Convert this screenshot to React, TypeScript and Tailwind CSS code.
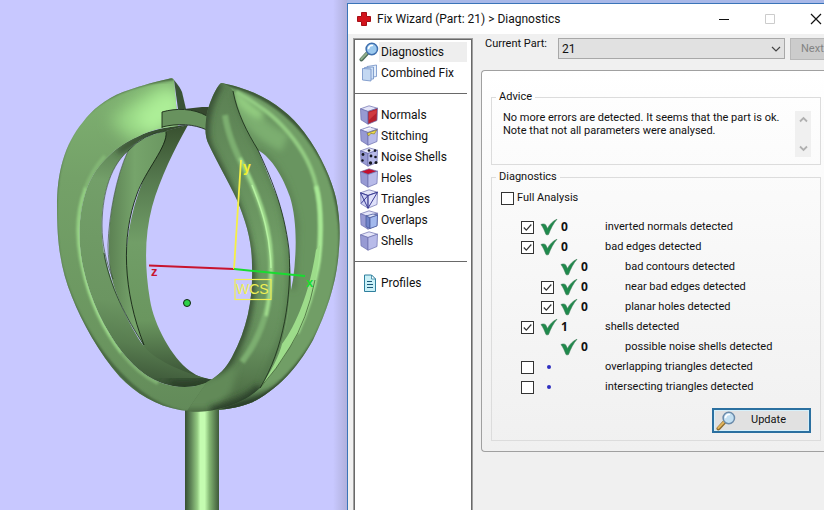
import { clsx } from 'clsx';
import { type FC, type ReactNode, useState } from 'react';

type CubeKind = 'normals' | 'stitching' | 'noise' | 'holes' | 'triangles' | 'overlaps' | 'shells';

interface PageLink {
	name: string;
	icon: ReactNode;
}

interface Check {
	id: string;
	label: string;
	count?: number;
	nested?: boolean;
	selectable?: boolean;
	defaultChecked?: boolean;
}

const CHECKS: Check[] = [
	{ id: 'inverted', label: 'inverted normals detected', count: 0, selectable: true, defaultChecked: true },
	{ id: 'edges', label: 'bad edges detected', count: 0, selectable: true, defaultChecked: true },
	{ id: 'contours', label: 'bad contours detected', count: 0, nested: true },
	{ id: 'near', label: 'near bad edges detected', count: 0, nested: true, selectable: true, defaultChecked: true },
	{ id: 'planar', label: 'planar holes detected', count: 0, nested: true, selectable: true, defaultChecked: true },
	{ id: 'shells', label: 'shells detected', count: 1, selectable: true, defaultChecked: true },
	{ id: 'noise', label: 'possible noise shells detected', count: 0, nested: true },
	{ id: 'overlapping', label: 'overlapping triangles detected', selectable: true },
	{ id: 'intersecting', label: 'intersecting triangles detected', selectable: true },
];

const Magnifier: FC<{ gold?: boolean }> = ({ gold }) => (
	<svg viewBox="0 0 20 20" className="size-5 shrink-0" aria-hidden="true">
		<path d="M2.5 17.5 8.5 11" stroke={gold ? '#8a6a2c' : '#4d6b58'} strokeWidth="4" strokeLinecap="round" />
		<path d="M2.3 17 8 11" stroke={gold ? '#e2b45c' : '#8fae8c'} strokeWidth="2" strokeLinecap="round" />
		<circle cx="12.8" cy="7" r="5.7" fill={gold ? '#c3e0f2' : '#9cc9ee'} stroke={gold ? '#6c8cab' : '#3f6fae'} strokeWidth="1.5" />
		<path d="M9.5 6.5a3.6 3.6 0 0 1 3.8-3" stroke="#fff" strokeWidth="1.6" fill="none" strokeLinecap="round" />
	</svg>
);

const Sheets: FC = () => (
	<svg viewBox="0 0 20 20" className="size-5 shrink-0" aria-hidden="true" stroke="#6f8ec4" strokeWidth=".8">
		<path d="m8 3.500 9.500-1.500v11.500L8 15z" fill="#e3eefb" />
		<path d="m5.500 4.500 9-.5v12l-9 .5z" fill="#d0e1f6" />
		<path d="m3.500 5.500 8.500.5v12l-8.500-1z" fill="#c3d8f2" />
	</svg>
);

const Cube: FC<{ kind: CubeKind }> = ({ kind }) => (
	<svg viewBox="0 0 20 20" className="size-5 shrink-0" aria-hidden="true" strokeLinejoin="round">
		<g stroke="#6c6eae" strokeWidth=".7">
			<path d="M1.500 3.800 10 .8l8.500 2.400L9 6.500z" fill={kind === 'holes' ? '#c4102e' : '#e4e5f8'} />
			<path d="M1.500 3.800 9 6.500v12.700L2 14.800z" fill={kind === 'triangles' ? '#cfd2f4' : '#979ad3'} />
			<path d="m9 6.500 9.500-3.300-.5 12.300-9 3.700z" fill={kind === 'normals' ? '#b5202e' : kind === 'triangles' ? '#dfe1fa' : '#b8bbe9'} />
		</g>
		{kind === 'normals' && <path d="m10 7.500 7.500-2.600V8L10 15z" fill="#d0383f" />}
		{kind === 'stitching' && (
			<>
				<path d="m8 7.500 9.800-3.600-2.500 4-3.500-.5-2 2.500z" fill="#f3e04a" stroke="#77702c" strokeWidth=".6" />
				<path d="M5 3.800 12 1.800" stroke="#fff" />
			</>
		)}
		{kind === 'noise' && (
			<g fill="#15171f">
				<circle cx="4" cy="7.500" r="1.400" />
				<circle cx="10" cy="3.500" r="1.300" />
				<circle cx="16" cy="3.600" r="1.300" />
				<circle cx="3.500" cy="13.500" r="1.200" />
				<circle cx="12" cy="9" r="1.400" />
				<circle cx="16.500" cy="10" r="1.300" />
				<circle cx="11.500" cy="16" r="1.700" />
				<circle cx="17" cy="15.500" r="1.500" />
			</g>
		)}
		{kind === 'triangles' && (
			<path d="M1.500 3.800 9 19.200 18.500 3.200M9 6.500v12.700M1.500 3.800 9 6.500l9.500-3.300M9 6.500l-7 8" fill="none" stroke="#3c3d94" strokeWidth="1" />
		)}
		{kind === 'overlaps' && (
			<g stroke="#4a5a9c" strokeWidth=".8">
				<path d="m7 6 4 1.500v11L7 16.500z" fill="#7184c9" />
				<path d="m11 7.500 7.500-2.500-.5 11-7 2.500z" fill="#a3b9ed" />
				<path d="m7 6 7-2 4.500 1L11 7.500z" fill="#e2e8fb" />
			</g>
		)}
	</svg>
);

const Page: FC = () => (
	<svg viewBox="0 0 20 20" className="size-5 shrink-0" aria-hidden="true">
		<path d="M5.500 2h7l4 4v12.500h-11z" fill="#c9f0f7" stroke="#2f7f9d" />
		<path d="M12.500 2v4h4z" fill="#fff" stroke="#2f7f9d" strokeWidth=".8" />
		<path d="M8 8.500h5M8 11.500h6M8 14.500h6" stroke="#1d5878" strokeWidth="1.200" />
	</svg>
);

const Tick: FC = () => (
	<svg viewBox="0 0 18 18" className="h-[18px] w-[18px]" aria-hidden="true">
		<path d="M1 6.500c2-.8 3.600-.6 4.600.3l1.900 3.700C9.700 6 13 3 17 1.200c-3.700 4.300-6.200 9.300-8.500 15.300-.8.500-1.800.4-2.500 0C4.700 13 3.200 9.500 1 6.500z" fill="#1f8a4c" stroke="#3c7a55" strokeWidth=".6" />
	</svg>
);

const PAGE_GROUPS: PageLink[][] = [
	[
		{ name: 'Diagnostics', icon: <Magnifier /> },
		{ name: 'Combined Fix', icon: <Sheets /> },
	],
	[
		{ name: 'Normals', icon: <Cube kind="normals" /> },
		{ name: 'Stitching', icon: <Cube kind="stitching" /> },
		{ name: 'Noise Shells', icon: <Cube kind="noise" /> },
		{ name: 'Holes', icon: <Cube kind="holes" /> },
		{ name: 'Triangles', icon: <Cube kind="triangles" /> },
		{ name: 'Overlaps', icon: <Cube kind="overlaps" /> },
		{ name: 'Shells', icon: <Cube kind="shells" /> },
	],
	[{ name: 'Profiles', icon: <Page /> }],
];

// outlines of the ring, shared between fills and clips
const BACK_RIGHT =
	'M221 83C228 84 240 87 252 92C274 101 292 116 304 132C322 156 332 181 336 198C341 222 340 240 338 260C335 286 327 311 313 340C300 363 283 386 253 402C240 407 230 409 218 410L213 390L260 386L250 150Z';
const BACK_RIGHT_INSIDE =
	'M234 92Q248 98 260 107C274 116 291 133 303 153C315 173 321 194 321 225C321 245 320 258 317 270C312 295 302 327 290 347Q277 368 260 388C276 364 288 333 290 297L258 150Q240 120 234 92Z';
const FRONT_STRAND =
	'M221 83C215 88 207 108 206 120C205 130 205 137 209 145C216 160 229 183 237 200C247 224 252 243 252 265C253 295 249 325 232 357C226 368 219 376 207 382L187 411C195 413 212 411 222 408C240 403 250 397 260 388C274 365 281 347 284 332C290 305 291 280 290 260C288 235 282 210 273 187C268 174 263 162 258 150C247 132 237 113 233 91Q228 84 221 83Z';
const LEFT_FACE =
	'M174 80Q173 77 168 79C150 83 137 87 123 92C105 99 92 110 83 122C64 145 57 173 57 207C57 245 61 270 72 297C82 322 99 353 120 377C135 393 157 406 180 410C193 412 212 411 222 408L238 365L213 379C200 387 187 388 173 386C150 381 138 371 122 352C105 330 90 300 83 267C77 238 79 211 87 188C96 163 120 144 137 137Q150 130 163 128L178 126Z';
const LEFT_INSIDE =
	'M188 125C170 126 150 130 137 137C118 145 96 163 87 188C79 211 77 238 83 267C90 300 105 330 122 352C138 371 150 381 173 386C187 388 200 387 213 380C180 372 153 359 143 345C130 327 112 290 104 253C99 225 102 195 112 173Q119 159 128 151C135 142 147 134 166 131Z';
const INNER_BAND =
	'M188 125C175 148 160 178 152 207C145 234 144 264 150 300C154 325 172 358 190 371Q201 379 213 380L195 386Q150 371 143 345C130 317 126 290 126 262C127 225 137 190 152 161Q160 147 165 131Z';
const INNER_PETAL =
	'M128 151Q141 136 166 131C168 146 145 171 137 194C121 237 123 291 144 345C128 321 112 290 110 268C106 230 113 185 128 151Z';

const ModelView: FC = () => (
	<svg viewBox="0 0 347 510" preserveAspectRatio="xMinYMin slice" className="block h-[510px] w-full" role="img" aria-label="21">
		<defs>
			<linearGradient id="stem">
				<stop offset="0" stopColor="#364f33" />
				<stop offset=".18" stopColor="#618759" />
				<stop offset=".36" stopColor="#94ca82" />
				<stop offset=".45" stopColor="#c4fcb0" />
				<stop offset=".58" stopColor="#c4fcb0" />
				<stop offset=".72" stopColor="#83b673" />
				<stop offset=".9" stopColor="#567a4e" />
				<stop offset="1" stopColor="#3e5a39" />
			</linearGradient>
			<linearGradient id="inside" gradientUnits="userSpaceOnUse" x1="180" y1="125" x2="140" y2="385">
				<stop offset="0" stopColor="#354c31" />
				<stop offset=".12" stopColor="#5c8154" />
				<stop offset=".25" stopColor="#739f69" />
				<stop offset=".7" stopColor="#6b9561" />
				<stop offset=".85" stopColor="#587d50" />
				<stop offset="1" stopColor="#3a5336" />
			</linearGradient>
			<linearGradient id="band" x1="0" y1="0" x2="0" y2="1">
				<stop offset="0" stopColor="#38502f" />
				<stop offset=".22" stopColor="#577b50" />
				<stop offset=".45" stopColor="#719e67" />
				<stop offset=".75" stopColor="#6a965f" />
				<stop offset="1" stopColor="#32482f" />
			</linearGradient>
			<linearGradient id="petal" x1="0" x2="1">
				<stop offset="0" stopColor="#5c8153" />
				<stop offset=".45" stopColor="#76a46b" />
				<stop offset="1" stopColor="#6b9761" />
			</linearGradient>
			<linearGradient id="strand" x1="0" y1="0" x2="0" y2="1">
				<stop offset="0" stopColor="#5b8053" />
				<stop offset=".5" stopColor="#6f9c65" />
				<stop offset=".8" stopColor="#658e5c" />
				<stop offset="1" stopColor="#47653f" />
			</linearGradient>
			<linearGradient id="face" x1="0" y1="0" x2="0" y2="1">
				<stop offset="0" stopColor="#7fb271" />
				<stop offset=".3" stopColor="#74a168" />
				<stop offset=".8" stopColor="#6a955f" />
				<stop offset="1" stopColor="#628a59" />
			</linearGradient>
			<linearGradient id="shadow">
				<stop offset="0" stopColor="#b0b0dc" stopOpacity="0" />
				<stop offset="1" stopColor="#b0b0dc" />
			</linearGradient>
			<filter id="soft1" x="-50%" y="-50%" width="200%" height="200%"><feGaussianBlur stdDeviation="1.2" /></filter>
			<filter id="soft3" x="-50%" y="-50%" width="200%" height="200%"><feGaussianBlur stdDeviation="3" /></filter>
			<filter id="soft8" x="-50%" y="-50%" width="200%" height="200%"><feGaussianBlur stdDeviation="8" /></filter>
			<clipPath id="clipBack"><path d={BACK_RIGHT} /></clipPath>
			<clipPath id="clipBackInside"><path d={BACK_RIGHT_INSIDE} /></clipPath>
			<clipPath id="clipStrand"><path d={FRONT_STRAND} /></clipPath>
			<clipPath id="clipFace"><path d={LEFT_FACE} /></clipPath>
			<clipPath id="clipInside"><path d={LEFT_INSIDE} /></clipPath>
		</defs>

		<rect x="333" width="14" height="510" fill="url(#shadow)" />
		<rect x="185" y="405" width="34" height="105" fill="url(#stem)" />

		{/* far right petal */}
		<path d={BACK_RIGHT} fill="#719e66" />
		<g clipPath="url(#clipBack)" fill="none">
			<path d="M221 82C274 94 306 128 323 160C344 201 345 247 336 285Q320 360 254 404L215 412" stroke="#3d5938" strokeWidth="5" filter="url(#soft1)" />
			<path d="M290 390Q260 404 222 411" stroke="#2c412a" strokeWidth="16" filter="url(#soft3)" />
		</g>
		<path d={BACK_RIGHT_INSIDE} fill="#699560" />
		<g clipPath="url(#clipBackInside)" fill="none">
			<path d="M239 100Q255 130 285 143" stroke="#7cae6f" strokeWidth="18" filter="url(#soft3)" />
			<path d="M236 93Q244 108 262 116" stroke="#95d082" strokeWidth="8" filter="url(#soft3)" />
			<path d="M258 151Q287 169 296 225L293 290" stroke="#587c50" strokeWidth="5" filter="url(#soft3)" />
		</g>
		<g clipPath="url(#clipBack)" fill="none">
			<path d="M236 92Q248 98 260 107C274 116 291 133 303 153C315 173 320 194 320 225C320 245 319 258 316 270" stroke="#93cc82" strokeWidth="4" filter="url(#soft1)" />
			<path d="M316 186C322 206 322 245 317 270Q312 300 297 333" stroke="#a9eb96" strokeWidth="4" filter="url(#soft1)" />
		</g>
		<path d="M320 245C318 280 306 325 290 347Q277 369 260 388Q278 361 282 344C297 324 310 290 316 250Z" fill="#9ddc8a" />
		<path d="M315 280Q307 320 290 347Q277 369 260 388" fill="none" stroke="#39532f" strokeWidth=".7" />

		{/* inner left side */}
		<path d={INNER_BAND} fill="url(#band)" />
		<path d={LEFT_INSIDE} fill="url(#inside)" />
		<g clipPath="url(#clipInside)" fill="none">
			<path d="M190 125Q150 129 118 152" stroke="#2e432b" strokeWidth="5" filter="url(#soft3)" />
			<path d="M166 388Q190 392 217 382" stroke="#263a25" strokeWidth="16" filter="url(#soft8)" />
			<path d="M172 386Q194 389 217 381" stroke="#2a3f28" strokeWidth="7" filter="url(#soft3)" />
		</g>
		<path d={INNER_PETAL} fill="url(#petal)" />
		<path d="M166 132C168 146 145 171 137 194C121 237 123 291 144 345" fill="none" stroke="#152414" strokeWidth=".9" />
		<path d="M166 131Q143 134 128 151M104 253C109 285 127 320 144 345" fill="none" stroke="#213720" strokeWidth=".8" />
		<path d="M128 151C116 177 109 215 108 245Q108 264 113 279C106 262 102 244 102 226C102 200 108 168 128 151Z" fill="#c8c8ff" stroke="#3c5637" strokeWidth=".7" />

		{/* left petal */}
		<path d={LEFT_FACE} fill="url(#face)" />
		<g clipPath="url(#clipFace)" fill="none">
			<path d="M122 132Q145 108 172 100" stroke="#97d684" strokeWidth="34" filter="url(#soft8)" />
			<path d="M142 128 180 96" stroke="#aef098" strokeWidth="28" filter="url(#soft8)" />
			<path d="M174 78C140 82 103 92 80 120C56 149 50 200 58 256C68 316 123 402 184 413L222 411" stroke="#466640" strokeWidth="4" filter="url(#soft1)" />
			<path d="M105 156Q92 170 85 190" stroke="#83b775" strokeWidth="4" filter="url(#soft1)" />
			<path d="M86 188C77 211 76 239 83 268C90 301 105 331 122 353" stroke="#93cf82" strokeWidth="4" filter="url(#soft1)" />
			<path d="M82 216C77 240 84 276 92 297Q99 316 111 335" stroke="#aeea9b" strokeWidth="1.500" filter="url(#soft1)" />
			<path d="M122 353Q138 373 158 383" stroke="#80b272" strokeWidth="4" filter="url(#soft1)" />
		</g>
		<path d="M174 80Q180 87 182 92L186 109 178 109Z" fill="#3a5336" />

		{/* bridge between the tips */}
		<path d="M184 109 202 107 210 107 208 120 198 113Z" fill="#36482f" />
		<path d="M162 112C176 108 193 108 207 116V130C194 124 178 123 162 127Z" fill="#68925e" />
		<path d="M162 128V112C176 108 193 108 207 116M162 127C178 123 194 124 207 130" fill="none" stroke="#1b2a19" strokeWidth=".9" />

		{/* front strand */}
		<path d={FRONT_STRAND} fill="url(#strand)" />
		<g clipPath="url(#clipStrand)" fill="none">
			<path d="M219 83C205 108 202 132 208 147C231 190 253 235 251 284Q249 340 216 380" stroke="#344c30" strokeWidth="8" filter="url(#soft3)" />
			<path d="M235 91C239 118 259 149 273 182C292 223 294 290 284 332L260 389" stroke="#4f7348" strokeWidth="4" filter="url(#soft3)" />
			<path d="M225 115C229 143 243 165 253 187C265 215 271 240 271 275Q270 325 242 362" stroke="#7cae6f" strokeWidth="6" filter="url(#soft1)" />
			<path d="M240 158C256 189 270 226 271 255Q272 288 266 316" stroke="#a4e190" strokeWidth="3" filter="url(#soft1)" />
			<path d="M252 185C263 212 270 235 271 268" stroke="#b6f2a2" strokeWidth="1.500" />
			<path d="M204 382 176 390 176 409 212 409Q222 404 232 390L238 365Z" fill="#628a59" filter="url(#soft3)" />
			<path d="M211 413Q244 406 262 389" stroke="#2c412a" strokeWidth="13" filter="url(#soft3)" />
		</g>
		<path d="M258 150C272 158 283 177 290 197C297 220 297 250 293 280L291 290C291 250 285 213 273 187C268 174 263 162 258 150Z" fill="#c8c8ff" />
		<path d="M233 91C237 113 247 132 258 150C270 176 284 207 289 250C292 295 284 349 260 388" fill="none" stroke="#1f331d" strokeWidth=".9" />

		<path d="M149 265.500 234 269" stroke="#c8142f" strokeWidth="2" />
		<path d="M234 269 241 160" stroke="#f5f046" strokeWidth="1.800" />
		<path d="m234 269 71 7" stroke="#18dc30" strokeWidth="2" />
		<rect x="235" y="279.500" width="36" height="20" fill="none" stroke="#f0ef54" strokeWidth="1.200" />
		<g fontFamily="Liberation Sans, sans-serif">
			<text x="236" y="294" fontSize="14" fill="#f0ef54">WCS</text>
			<text x="151" y="276" fontSize="13" fontWeight="bold" fill="#c8142f">z</text>
			<text x="243" y="172" fontSize="14" fontWeight="bold" fill="#f2ee2e">y</text>
			<text x="306" y="287" fontSize="13" fontWeight="bold" fill="#18dc30">x</text>
		</g>
		<circle cx="187" cy="303" r="3.500" fill="#2dd148" stroke="#102410" />
	</svg>
);

const CheckBox: FC<{ id: string; defaultChecked?: boolean }> = ({ id, defaultChecked }) => (
	<span className="relative block size-[13px]">
		<input
			id={id}
			type="checkbox"
			defaultChecked={defaultChecked}
			className="peer block size-[13px] appearance-none border border-[#333] bg-white"
		/>
		<svg viewBox="0 0 13 13" className="pointer-events-none absolute inset-0 hidden size-[13px] peer-checked:block" aria-hidden="true">
			<path d="m2.800 6.500 2.500 2.700 5-5.700" fill="none" stroke="#333" strokeWidth="1.200" />
		</svg>
	</span>
);

const CheckRow: FC<{ check: Check }> = ({ check }) => (
	<li className={clsx('grid h-5 grid-cols-[19px_21px_44px_1fr] items-center whitespace-nowrap', check.nested && 'ml-5')}>
		{check.selectable ? <CheckBox id={check.id} defaultChecked={check.defaultChecked} /> : <span />}
		{check.count === undefined ? <span className="ml-[7px] size-1 rounded-full bg-[#2f2fc0]" /> : <Tick />}
		<b className="font-['Open_Sans',sans-serif] text-xs">{check.count}</b>
		{check.selectable ? <label htmlFor={check.id}>{check.label}</label> : <span>{check.label}</span>}
	</li>
);

const Sidebar: FC<{ active: string; onSelect: (name: string) => void }> = ({ active, onSelect }) => (
	<nav className="w-[120px] shrink-0 border-x border-t border-[#a0a0a0] bg-white text-xs">
		<div className="h-full border-x border-t border-[#696969] pt-px pr-1">
			{PAGE_GROUPS.map((group, i) => (
				<ul key={group[0].name}>
					{i > 0 && (
						<li className="flex h-[21px] items-center" role="separator">
							<span className="h-px w-full bg-[#696969]" />
						</li>
					)}
					{group.map((page) => (
						<li key={page.name}>
							<button type="button" onClick={() => onSelect(page.name)} className="flex h-[21px] w-full items-center pl-1 text-left whitespace-nowrap">
								{page.icon}
								<span className={clsx('flex-1 pl-0.5 leading-5', page.name === active && 'bg-[#eeeeee]')}>{page.name}</span>
							</button>
						</li>
					))}
				</ul>
			))}
		</div>
	</nav>
);

const TitleBar: FC = () => (
	<header className="flex h-[30px] items-center bg-white pl-2">
		<svg viewBox="0 0 16 16" className="size-4" aria-hidden="true">
			<path d="M5.500 1.500h5v4h4v5h-4v4h-5v-4h-4v-5h4z" fill="#d3141c" stroke="#a50f16" strokeLinejoin="round" />
		</svg>
		<h1 className="flex-1 pl-[5px] text-xs whitespace-nowrap">Fix Wizard (Part: 21) &gt; Diagnostics</h1>
		<div className="flex gap-[30px]">
			<button type="button" aria-label="Minimize">
				<svg viewBox="0 0 16 16" className="size-4"><path d="M3 8.500h10" stroke="#111" /></svg>
			</button>
			<button type="button" aria-label="Maximize" disabled>
				<svg viewBox="0 0 16 16" className="size-4"><path d="M3.500 3.500h9v9h-9z" stroke="#ccc" fill="none" /></svg>
			</button>
			<button type="button" aria-label="Close">
				<svg viewBox="0 0 16 16" className="size-4"><path d="m3 3 10 10M13 3 3 13" stroke="#111" strokeWidth="1.200" /></svg>
			</button>
		</div>
	</header>
);

const Group: FC<{ title: string; children: ReactNode }> = ({ title, children }) => (
	<fieldset className="min-w-0 border border-[#dcdcdc]">
		<legend className="ml-1 px-[3px] leading-4">{title}</legend>
		{children}
	</fieldset>
);

export default function App() {
	const [page, setPage] = useState('Diagnostics');

	return (
		<div className="flex min-h-screen w-full overflow-hidden bg-[#c8c8ff] font-[Roboto,sans-serif] text-[11px] text-[#111]">
			<div className="w-[347px] shrink-0">
				<ModelView />
			</div>

			<main className="flex min-w-0 flex-1 flex-col border-t-3 border-[#a8b8e8]">
				<div className="flex flex-1 flex-col border-t border-l border-[#3a74b8] bg-[#f0f0f0]">
					<TitleBar />
					<div className="flex flex-1 pt-1 pl-[5px]">
						<Sidebar active={page} onSelect={setPage} />

						<div className="min-w-0 flex-1 pl-2">
							<div className="flex items-start pl-1">
								<label htmlFor="part" className="w-[73px] leading-3 whitespace-nowrap">Current Part:</label>
								<div className="relative flex-1">
									<select id="part" className="block h-[21px] w-full appearance-none border border-[#a8a8a8] bg-[#e1e1e1] pl-[3px] text-xs">
										<option>21</option>
									</select>
									<svg viewBox="0 0 10 10" className="pointer-events-none absolute top-1.5 right-1 size-[10px]" aria-hidden="true">
										<path d="m1 3 4 4 4-4" fill="none" stroke="#444" strokeWidth="1.200" />
									</svg>
								</div>
								<button type="button" disabled className="ml-[5px] h-[22px] w-[34px] border-y border-l border-[#b8b8b8] bg-[#cccccc] pl-2.5 text-left text-[#838383]">
									Next
								</button>
							</div>

							<section className="mt-[10px] rounded-l-sm border-y border-l border-[#a0a0a0] bg-linear-to-b from-white to-[#f0f0f0] pt-[18px] pr-[3px] pb-[10px] pl-[9px]">
								<Group title="Advice">
									<div className="flex items-start pt-1.5 pr-[9px] pb-[7px] pl-[11px]">
										<p className="flex-1 leading-[13px] whitespace-nowrap">
											No more errors are detected. It seems that the part is ok.
											<br />
											Note that not all parameters were analysed.
										</p>
										<div className="flex h-[46px] w-4 flex-col items-center justify-between bg-[#f0f0f0] py-1 text-[#b0b0b0]">
											<button type="button" aria-label="Scroll up">
												<svg viewBox="0 0 9 9" className="size-[9px]"><path d="m1 6.500 3.500-3.500L8 6.500" fill="none" stroke="currentColor" strokeWidth="1.800" /></svg>
											</button>
											<button type="button" aria-label="Scroll down">
												<svg viewBox="0 0 9 9" className="size-[9px]"><path d="M1 2.500 4.500 6 8 2.500" fill="none" stroke="currentColor" strokeWidth="1.800" /></svg>
											</button>
										</div>
									</div>
								</Group>

								<div className="mt-1">
									<Group title="Diagnostics">
										<div className="mt-[5px] flex h-4 items-center gap-[3px] pl-[9px]">
											<CheckBox id="full" />
											<label htmlFor="full">Full Analysis</label>
										</div>
										<ul className="mt-[11px] pl-[29px]">
											{CHECKS.map((check) => (
												<CheckRow key={check.id} check={check} />
											))}
										</ul>
										<div className="flex justify-end pt-[11px] pr-[9px] pb-[7px]">
											<button type="button" className="flex h-[25px] w-[99px] items-center border-2 border-[#2b70a0] bg-[#e1e1e1] pl-0.5 inset-ring inset-ring-[#d5f0fb]">
												<Magnifier gold />
												<span className="flex-1 pr-2 text-center">Update</span>
											</button>
										</div>
									</Group>
								</div>
							</section>
						</div>
					</div>
				</div>
			</main>
		</div>
	);
}
